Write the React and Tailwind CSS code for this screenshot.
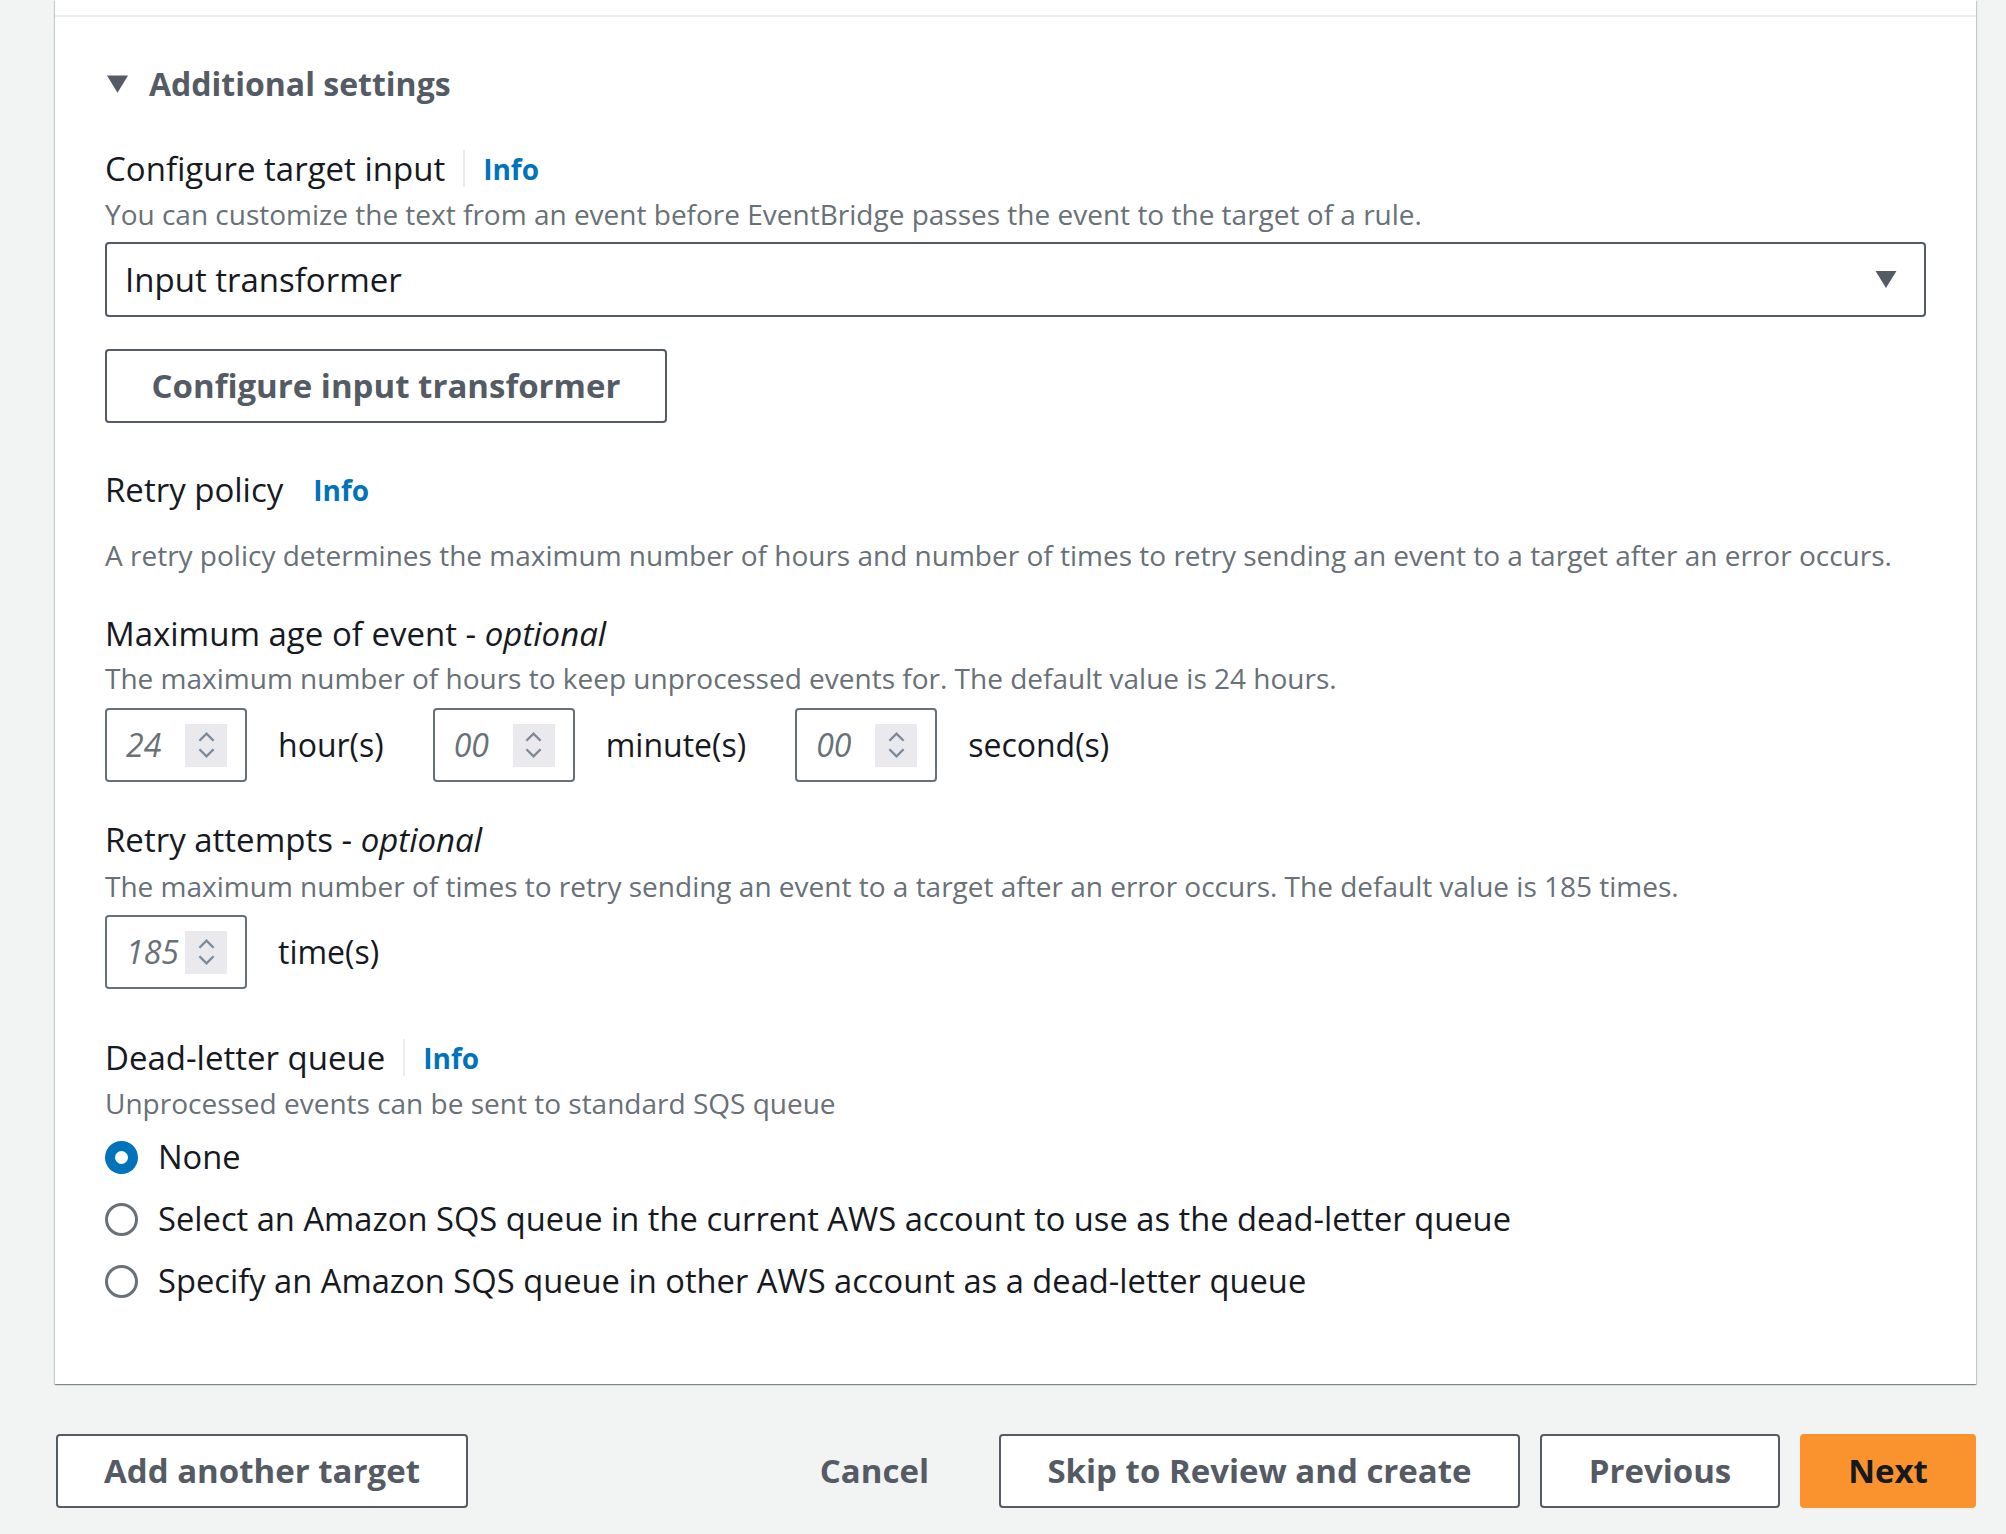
import React from "react";

// ── Small pieces ─────────────────────────────────────────────
function Caret({ className }) {
  return (
    <svg viewBox="0 0 24 20" className={className} fill="currentColor">
      <path d="M1 1h22L12 19z" />
    </svg>
  );
}

function Info() {
  return <span className="text-[#0073bb] font-bold text-[28px]">Info</span>;
}

function FieldLabel({ children, divider, info = true }) {
  return (
    <div className="flex items-center h-[37px] text-[33px] text-[#16191f]">
      <span>{children}</span>
      {info && (
        <>
          {divider ? (
            <span className="mx-[18px] w-[2px] h-[37px] bg-[#eaeded]" />
          ) : (
            <span className="w-[30px]" />
          )}
          <Info />
        </>
      )}
    </div>
  );
}

function Description({ children, className = "" }) {
  return (
    <p className={`text-[28px] leading-[30px] text-[#687078] ${className}`}>
      {children}
    </p>
  );
}

function NumberBox({ value }) {
  return (
    <div className="flex items-center w-[142px] h-[74px] border-2 border-[#687078] rounded-[4px] pl-[19px] pr-[18px]">
      <span className="flex-1 italic text-[32px] text-[#687078]">{value}</span>
      <span className="flex flex-col items-center justify-center gap-[6px] w-[42px] h-[43px] bg-[#e9e9ee] text-[#7d8998]">
        <svg viewBox="0 0 18 10" className="w-[17px] h-[10px]" fill="none" stroke="currentColor" strokeWidth="2.5">
          <path d="M1.5 9L9 1.5 16.5 9" />
        </svg>
        <svg viewBox="0 0 18 10" className="w-[17px] h-[10px]" fill="none" stroke="currentColor" strokeWidth="2.5">
          <path d="M1.5 1L9 8.5 16.5 1" />
        </svg>
      </span>
    </div>
  );
}

function Unit({ value, unit }) {
  return (
    <div className="flex items-center gap-[31px]">
      <NumberBox value={value} />
      <span className="text-[32px] text-[#16191f]">{unit}</span>
    </div>
  );
}

function Radio({ checked, children }) {
  return (
    <label className="flex items-center h-[40px] gap-[20px] text-[32.7px] text-[#16191f]">
      {checked ? (
        <span className="flex items-center justify-center w-[33px] h-[33px] rounded-full bg-[#0073bb]">
          <span className="w-[13px] h-[13px] rounded-full bg-white" />
        </span>
      ) : (
        <span className="w-[33px] h-[33px] rounded-full border-[3px] border-[#687078] bg-white" />
      )}
      <span>{children}</span>
    </label>
  );
}

function Button({ children, className = "" }) {
  return (
    <button
      className={`h-[74px] rounded-[4px] border-2 border-[#545b64] bg-white text-[33px] font-bold text-[#545b64] ${className}`}
    >
      {children}
    </button>
  );
}

// ── Page ─────────────────────────────────────────────────────
export default function App() {
  return (
    <div
      className="w-[2006px] h-[1534px] bg-[#f2f3f3] overflow-hidden"
      style={{ fontFamily: '"Open Sans", "Noto Sans", sans-serif' }}
    >
      {/* ── Panel ── */}
      <div className="ml-[55px] w-[1921px] h-[1384px] bg-white pt-[15px] shadow-[0_1px_1px_0_rgba(0,28,36,0.3),1px_1px_1px_0_rgba(0,28,36,0.15),-1px_1px_1px_0_rgba(0,28,36,0.15)]">
        <div className="h-[2px] bg-[#eaeded]" />

        <div className="px-[50px] flex flex-col">
          {/* Additional settings header */}
          <div className="mt-[47px] flex items-center h-[40px] gap-[20px] text-[#545b64]">
            <Caret className="w-[23px] h-[20px] ml-[1px]" />
            <span className="text-[32px] font-bold">Additional settings</span>
          </div>

          {/* Configure target input */}
          <div className="mt-[46px]">
            <FieldLabel divider>Configure target input</FieldLabel>
          </div>
          <Description className="mt-[12px]">
            You can customize the text from an event before EventBridge passes the event to the target of a rule.
          </Description>
          <div className="mt-[13px] flex items-center justify-between h-[75px] border-2 border-[#545b64] rounded-[4px] pl-[18px] pr-[26px]">
            <span className="text-[33px] text-[#16191f]">Input transformer</span>
            <Caret className="w-[24px] h-[19px] text-[#545b64]" />
          </div>
          <div className="mt-[32px]">
            <Button className="w-[562px]">Configure input transformer</Button>
          </div>

          {/* Retry policy */}
          <div className="mt-[48px]">
            <FieldLabel>Retry policy</FieldLabel>
          </div>
          <Description className="mt-[32px]">
            A retry policy determines the maximum number of hours and number of times to retry sending an event to a target after an error occurs.
          </Description>

          <div className="mt-[45px]">
            <FieldLabel info={false}>
              Maximum age of event - <i>optional</i>
            </FieldLabel>
          </div>
          <Description className="mt-[11px]">
            The maximum number of hours to keep unprocessed events for. The default value is 24 hours.
          </Description>
          <div className="mt-[15px] flex items-center gap-[49px]">
            <Unit value="24" unit="hour(s)" />
            <Unit value="00" unit="minute(s)" />
            <Unit value="00" unit="second(s)" />
          </div>

          <div className="mt-[39px]">
            <FieldLabel info={false}>
              Retry attempts - <i>optional</i>
            </FieldLabel>
          </div>
          <Description className="mt-[13px]">
            The maximum number of times to retry sending an event to a target after an error occurs. The default value is 185 times.
          </Description>
          <div className="mt-[14px] flex">
            <Unit value="185" unit="time(s)" />
          </div>

          {/* Dead-letter queue */}
          <div className="mt-[50px]">
            <FieldLabel divider>Dead-letter queue</FieldLabel>
          </div>
          <Description className="mt-[12px]">
            Unprocessed events can be sent to standard SQS queue
          </Description>
          <div className="mt-[19px] flex flex-col gap-[22px]">
            <Radio checked>None</Radio>
            <Radio>Select an Amazon SQS queue in the current AWS account to use as the dead-letter queue</Radio>
            <Radio>Specify an Amazon SQS queue in other AWS account as a dead-letter queue</Radio>
          </div>
        </div>
      </div>

      {/* ── Footer actions ── */}
      <div className="mt-[50px] ml-[56px] w-[1920px] flex items-center justify-between">
        <Button className="w-[412px]">Add another target</Button>
        <div className="flex items-center gap-[20px]">
          <button className="h-[74px] px-[50px] text-[33px] font-bold text-[#545b64]">Cancel</button>
          <Button className="w-[521px]">Skip to Review and create</Button>
          <Button className="w-[240px]">Previous</Button>
          <button className="w-[176px] h-[74px] rounded-[4px] bg-[#fa932d] text-[33px] font-bold text-[#16191f]">
            Next
          </button>
        </div>
      </div>
    </div>
  );
}
